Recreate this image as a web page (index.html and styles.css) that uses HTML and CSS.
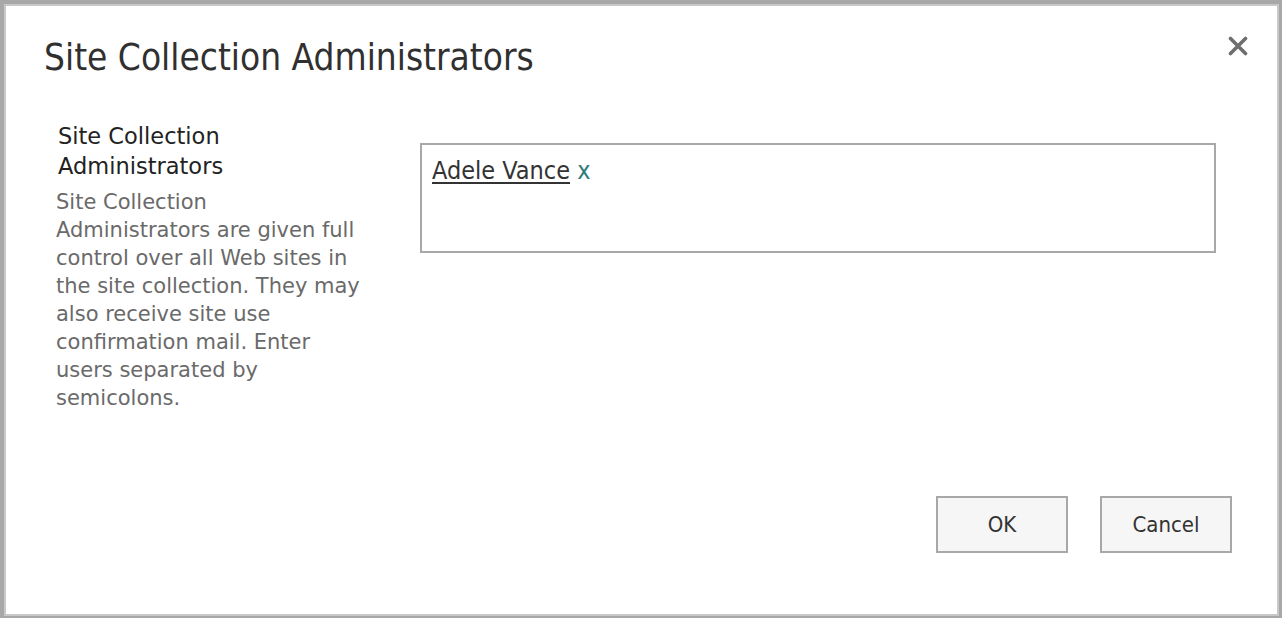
FILE: index.html
```html
<!DOCTYPE html>
<html lang="en">
<head>
<meta charset="utf-8">
<title>Site Collection Administrators</title>
<link rel="stylesheet" href="styles.css">
</head>
<body>
<div class="dialog">
  <h1 class="dialog-title">Site Collection Administrators</h1>
  <button class="close-btn" aria-label="Close">
    <svg width="20" height="20" viewBox="0 0 20 20" aria-hidden="true">
      <path d="M2.5 2.5 L17.5 17.5 M17.5 2.5 L2.5 17.5" stroke="#6e6e6e" stroke-width="3.6" stroke-linecap="round" fill="none"/>
    </svg>
  </button>
  <div class="section">
    <div class="section-info">
      <div class="section-label">Site Collection Administrators</div>
      <div class="section-desc">Site Collection Administrators are given full control over all Web sites in the site collection. They may also receive site use confirmation mail. Enter users separated by semicolons.</div>
    </div>
    <div class="section-field">
      <div class="people-box">
        <span class="person">Adele Vance</span> <span class="person-remove">x</span>
      </div>
    </div>
  </div>
  <div class="footer">
    <button class="btn">OK</button>
    <button class="btn">Cancel</button>
  </div>
</div>
</body>
</html>
```
FILE: styles.css
```css
html, body {
  margin: 0;
  height: 100%;
}
body {
  background: #a8a8a8;
  padding: 4px 3px 2px 4px;
  box-sizing: border-box;
  font-family: "DejaVu Sans", sans-serif;
  overflow: hidden;
}
.dialog {
  position: relative;
  height: 100%;
  box-sizing: border-box;
  border: 2px solid #c8c8c8;
  background: #ffffff;
  display: flex;
  flex-direction: column;
}
.dialog-title {
  margin: 30px 0 0 38px;
  font-family: "DejaVu Sans Condensed", "DejaVu Sans", sans-serif;
  font-weight: normal;
  font-size: 36.7px;
  line-height: 44px;
  color: #303030;
}
.close-btn {
  position: absolute;
  top: 30px;
  right: 29px;
  width: 20px;
  height: 20px;
  padding: 0;
  border: 0;
  background: none;
  display: flex;
}
.section {
  display: flex;
  margin-top: 41px;
  padding-left: 52px;
}
.section-info {
  width: 312px;
}
.section-label {
  font-size: 22.5px;
  line-height: 30px;
  color: #222222;
}
.section-desc {
  width: 308px;
  margin-top: 7px;
  margin-left: -2px;
  font-size: 21px;
  line-height: 28px;
  color: #6a6a6a;
}
.section-field {
  margin-left: 50px;
  padding-top: 22px;
}
.people-box {
  width: 796px;
  height: 110px;
  box-sizing: border-box;
  border: 2px solid #a8a8a8;
  padding: 11px 10px;
  font-family: "DejaVu Sans Condensed", "DejaVu Sans", sans-serif;
  font-size: 25px;
  line-height: 30px;
  color: #333333;
}
.person {
  text-decoration: underline;
  text-underline-offset: 3px;
}
.person-remove {
  color: #2f7a7c;
}
.footer {
  display: flex;
  justify-content: flex-end;
  gap: 32px;
  margin-top: auto;
  margin-bottom: 61px;
  padding-right: 45px;
}
.btn {
  width: 132px;
  height: 57px;
  box-sizing: border-box;
  border: 2px solid #a8a8a8;
  background: #f6f6f6;
  font-family: "DejaVu Sans Condensed", "DejaVu Sans", sans-serif;
  font-size: 22px;
  color: #333333;
  padding: 0;
}
```
